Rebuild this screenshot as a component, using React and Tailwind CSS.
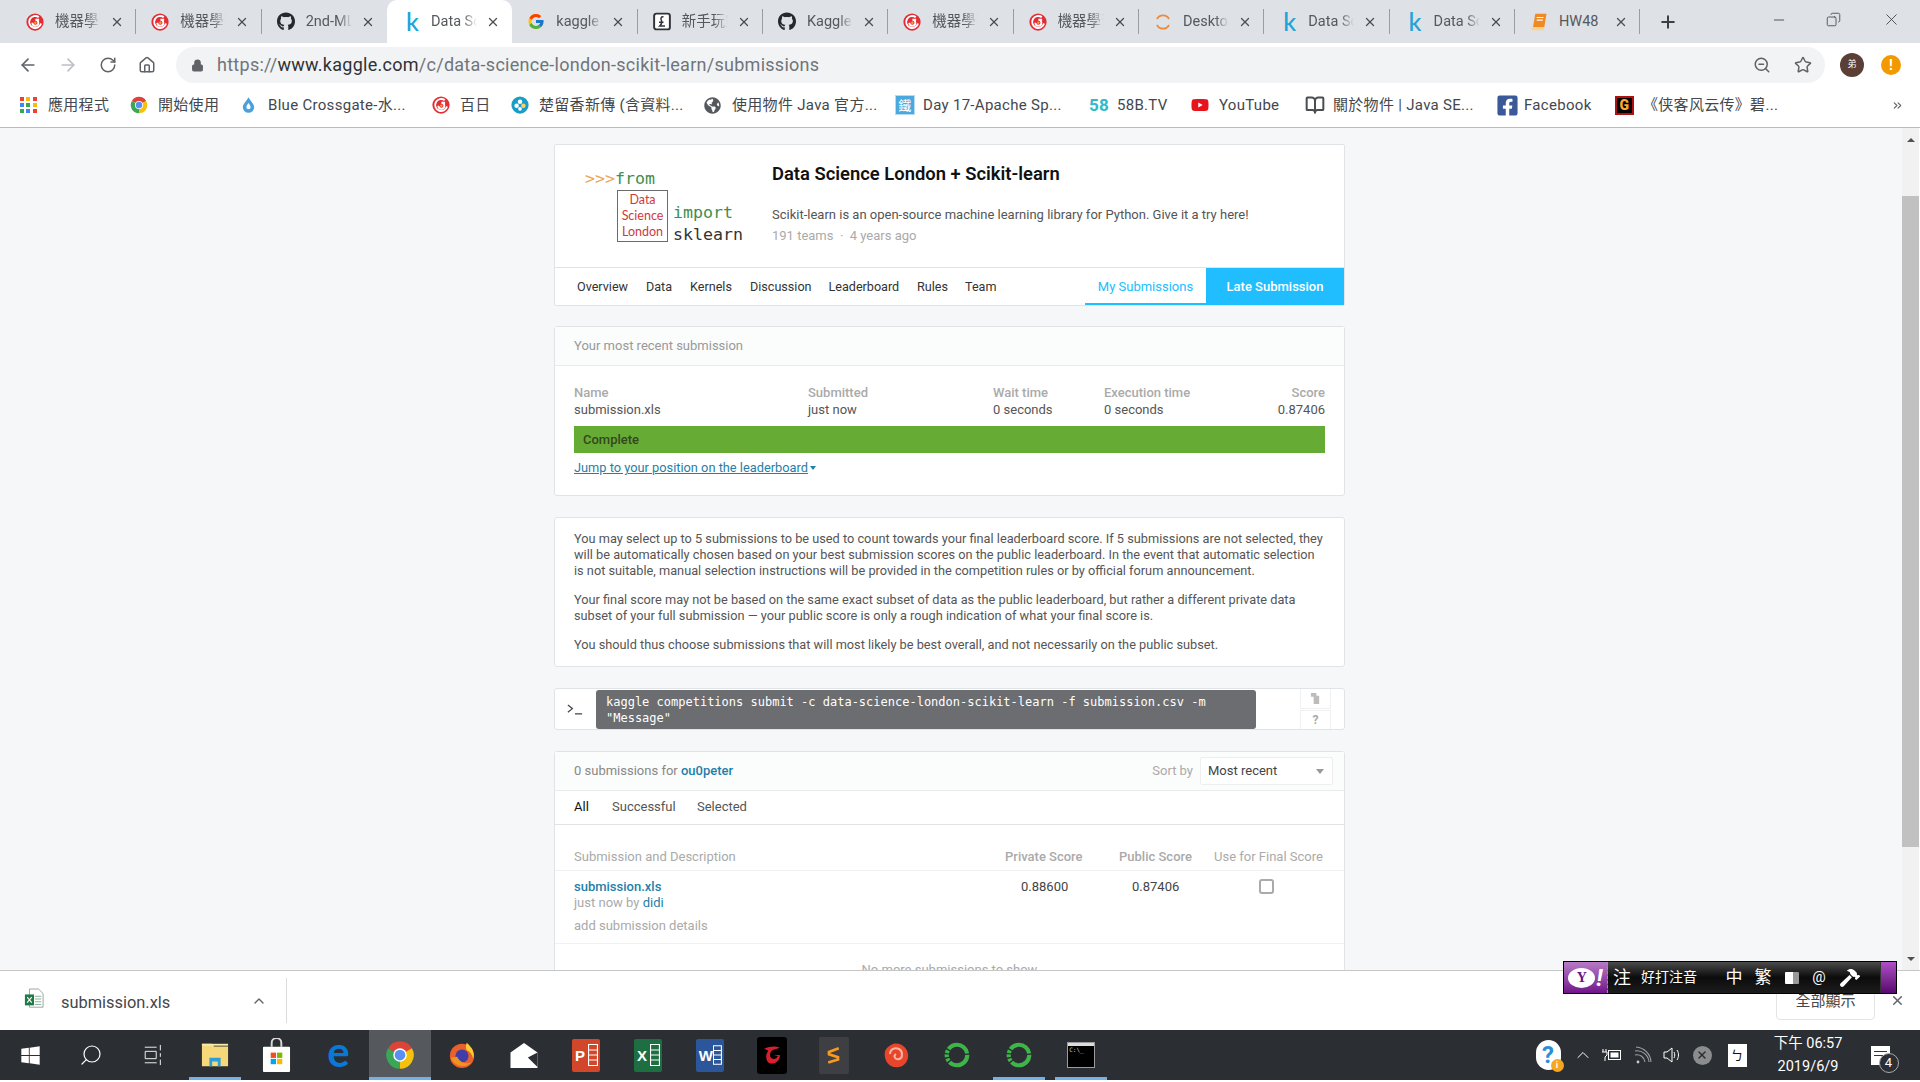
import { ArrowLeft, ArrowRight, RotateCw, Home, Lock, ZoomOut, Star, ChevronUp, X, Plus, Minus, Search, Copy, ChevronsRight, BookOpen } from "lucide-react";
import { FaGithub, FaFacebookSquare, FaYoutube, FaWindows, FaGlobeAmericas, FaHammer } from "react-icons/fa";
import { FcGoogle } from "react-icons/fc";

const SANS = "font-['Roboto','Noto_Sans_CJK_TC',sans-serif]";

function Swirl({ className = "w-[18px] h-[18px]" }) {
  return (
    <svg viewBox="0 0 24 24" className={className}>
      <circle cx="12" cy="12" r="11.5" fill="#e32d35" />
      <path d="M17 5.5A8 8 0 1 0 20 14" fill="none" stroke="#fff" strokeWidth="2.6" />
      <path d="M8.5 13a4 4 0 1 0 4-4h5" fill="none" stroke="#fff" strokeWidth="2.4" />
      <circle cx="12.5" cy="13" r="1.6" fill="#f6a623" />
    </svg>
  );
}

function KaggleK() {
  return <span className="ml-[4px] text-[25px] leading-none font-medium text-[#20a4d8] font-['Lato',sans-serif]">k</span>;
}

function ChromeLogo({ className = "w-[18px] h-[18px]" }) {
  return (
    <svg viewBox="0 0 24 24" className={className}>
      <path d="M12 12L2.47 6.5A11 11 0 0 1 21.53 6.5Z" fill="#db4437" />
      <path d="M12 12L21.53 6.5A11 11 0 0 1 12 23Z" fill="#f4c20d" />
      <path d="M12 12L12 23A11 11 0 0 1 2.47 6.5Z" fill="#3aa757" />
      <circle cx="12" cy="12" r="5.4" fill="#fff" />
      <circle cx="12" cy="12" r="4.3" fill="#5a8ff0" />
    </svg>
  );
}

function TabBook() {
  return (
    <svg viewBox="0 0 24 24" className="w-[20px] h-[20px]">
      <path d="M7 1h15l-3 18H4z" fill="#f08a24" />
      <path d="M4 19h15l-.5 4H4.5a2 2 0 0 1-.5-4z" fill="#fbd28f" />
      <path d="M9 6h9M9 9.5h8" stroke="#fff" strokeWidth="1.4" />
    </svg>
  );
}

function TabCoin() {
  return (
    <svg viewBox="0 0 24 24" className="w-[19px] h-[19px]">
      <rect x="1.5" y="1.5" width="21" height="21" rx="3" fill="#fff" stroke="#30343a" strokeWidth="2.6" />
      <path d="M14 6c-3-1-4 2-3 4s1 5-2 8h7M8 13h6" fill="none" stroke="#30343a" strokeWidth="2" />
    </svg>
  );
}

function TabDesktop() {
  return (
    <svg viewBox="0 0 24 24" className="w-[20px] h-[20px]">
      <path d="M4 8a9 9 0 0 1 16 0" fill="none" stroke="#ee8a3c" strokeWidth="2.4" />
      <path d="M4 16a9 9 0 0 0 16 0" fill="none" stroke="#ee8a3c" strokeWidth="2.4" />
    </svg>
  );
}

const TABS = [
  { icon: <Swirl />, title: "機器學習" },
  { icon: <Swirl />, title: "機器學習" },
  { icon: <FaGithub className="text-[19px] text-[#24292e]" />, title: "2nd-ML" },
  { icon: <KaggleK />, title: "Data Sci", active: true },
  { icon: <FcGoogle className="text-[19px]" />, title: "kaggle s" },
  { icon: <TabCoin />, title: "新手玩家" },
  { icon: <FaGithub className="text-[19px] text-[#24292e]" />, title: "Kaggle" },
  { icon: <Swirl />, title: "機器學習" },
  { icon: <Swirl />, title: "機器學習" },
  { icon: <TabDesktop />, title: "Desktop" },
  { icon: <KaggleK />, title: "Data Sci" },
  { icon: <KaggleK />, title: "Data Sci" },
  { icon: <TabBook />, title: "HW48", noFade: true },
];

function Tab({ tab, hideSep }) {
  return (
    <div className={`relative flex items-center w-[125.33px] h-full ${tab.active ? "bg-white rounded-t-[10px]" : ""}`}>
      <div className="w-[33px] pl-[15px] flex items-center justify-start shrink-0">{tab.icon}</div>
      <div
        className={`w-[46px] ml-[11px] overflow-hidden whitespace-nowrap text-[14.5px] text-[#55585d] ${tab.noFade ? "" : "[mask-image:linear-gradient(to_right,#000_70%,transparent)]"}`}
      >
        {tab.title}
      </div>
      <X className="w-[14px] h-[14px] ml-[9px] text-[#4a4d51] shrink-0" strokeWidth={2.2} />
      {!hideSep && <div className="absolute right-0 top-[9px] h-[25px] w-px bg-[#9a9da1]" />}
    </div>
  );
}

function TabStrip() {
  return (
    <div className="flex h-[43px] bg-[#dee1e6] shrink-0">
      <div className="w-[11px]" />
      {TABS.map((tab, i) => (
        <Tab key={i} tab={tab} hideSep={i === 2 || i === 3} />
      ))}
      <div className="w-[56px] flex items-center justify-center">
        <Plus className="w-[20px] h-[20px] text-[#3c4043]" strokeWidth={2.4} />
      </div>
      <div className="flex-1" />
      <div className="flex items-center pb-[4px] pr-[14px] text-[#3c4043]">
        <div className="w-[54px] flex justify-center"><Minus className="w-[16px] h-[16px]" strokeWidth={1.3} /></div>
        <div className="w-[54px] mr-[16px] flex justify-center"><Copy className="w-[15px] h-[17px] -scale-x-100" strokeWidth={1.3} /></div>
        <div className="w-[30px] flex justify-center"><X className="w-[19px] h-[19px]" strokeWidth={1.1} /></div>
      </div>
    </div>
  );
}

function Toolbar() {
  return (
    <div className="flex items-center h-[44px] bg-white shrink-0">
      <div className="w-[47px] flex justify-end pr-[9px]"><ArrowLeft className="w-[20px] h-[20px] text-[#5f6368]" strokeWidth={2} /></div>
      <div className="w-[42px] flex justify-center"><ArrowRight className="w-[20px] h-[20px] text-[#bcbfc3]" strokeWidth={2} /></div>
      <div className="w-[38px] flex justify-center"><RotateCw className="w-[18px] h-[18px] text-[#5f6368]" strokeWidth={2} /></div>
      <div className="w-[40px] flex justify-center"><Home className="w-[18px] h-[18px] text-[#5f6368]" strokeWidth={2} /></div>
      <div className="ml-[9px] w-[1649px] h-[36px] rounded-full bg-[#f1f3f4] flex items-center">
        <Lock className="ml-[15px] w-[13px] h-[13px] text-[#5f6368] fill-[#5f6368]" />
        <div className="ml-[13px] pb-[1px] text-[18px] text-[#70757a] whitespace-nowrap tracking-[0.27px]">
          https://<span className="text-[#303134]">www.kaggle.com</span>/c/data-science-london-scikit-learn/submissions
        </div>
        <div className="flex-1" />
        <ZoomOut className="w-[18px] h-[18px] text-[#5f6368]" strokeWidth={2} />
        <Star className="ml-[23px] mr-[13px] w-[18px] h-[18px] text-[#5f6368]" strokeWidth={2} />
      </div>
      <div className="ml-[15px] w-[24px] h-[24px] rounded-full bg-[#5b3f36] text-white text-[9px] flex items-center justify-center">弟</div>
      <div className="ml-[17px] w-[20px] h-[20px] rounded-full bg-[#f29900] text-white text-[14px] font-bold flex items-center justify-center">!</div>
    </div>
  );
}

function AppsIcon() {
  const colors = ["bg-[#ea4335]", "bg-[#fbbc05]", "bg-[#ea4335]", "bg-[#4285f4]", "bg-[#34a853]", "bg-[#fbbc05]", "bg-[#34a853]", "bg-[#4285f4]", "bg-[#ea4335]"];
  return (
    <div className="grid grid-cols-3 gap-[2px] w-[17px] h-[17px]">
      {colors.map((c, i) => (
        <div key={i} className={`w-[4px] h-[4px] ${c}`} />
      ))}
    </div>
  );
}

function DropIcon() {
  return (
    <svg viewBox="0 0 24 24" className="w-[17px] h-[20px]">
      <path d="M12 1C8 8 4 11 4 15a8 8 0 0 0 16 0c0-4-4-7-8-14z" fill="#4a9fdc" />
      <path d="M12 9c-2 3-3 4-3 6a3 3 0 0 0 6 0c0-2-1-3-3-6z" fill="#fff" />
    </svg>
  );
}

function FlowerIcon() {
  return (
    <svg viewBox="0 0 24 24" className="w-[18px] h-[18px]">
      <circle cx="12" cy="12" r="11.5" fill="#1b9cc4" />
      <circle cx="12" cy="7.5" r="3" fill="#fff" />
      <circle cx="7.5" cy="13" r="3" fill="#fff" />
      <circle cx="16.5" cy="13" r="3" fill="#f5d36a" />
      <circle cx="12" cy="17" r="2.5" fill="#fff" />
    </svg>
  );
}

function DayIcon() {
  return (
    <div className="w-[20px] h-[20px] bg-[#4aa8dc] border border-[#b5dcf2] flex items-center justify-center text-[13px] text-white leading-none">鐵</div>
  );
}

const BOOKMARKS = [
  { w: "w-[110px]", icon: <AppsIcon />, label: "應用程式" },
  { w: "w-[110px]", icon: <ChromeLogo />, label: "開始使用" },
  { w: "w-[192px]", icon: <DropIcon />, label: "Blue Crossgate-水..." },
  { w: "w-[79px]", icon: <Swirl />, label: "百日" },
  { w: "w-[193px]", icon: <FlowerIcon />, label: "楚留香新傳 (含資料..." },
  { w: "w-[191px]", icon: <FaGlobeAmericas className="text-[17px] text-[#55585d]" />, label: "使用物件 Java 官方..." },
  { w: "w-[194px]", icon: <DayIcon />, label: "Day 17-Apache Sp..." },
  { w: "w-[102px]", icon: <span className="text-[17px] font-bold text-[#2fb9c9] leading-none">58</span>, label: "58B.TV" },
  { w: "w-[114px]", icon: <FaYoutube className="text-[18px] text-[#e8141c]" />, label: "YouTube" },
  { w: "w-[191px]", icon: <BookOpen className="w-[20px] h-[20px] text-[#4a4d51]" strokeWidth={2.4} />, label: "關於物件 | Java SE..." },
  { w: "w-[119px]", icon: <FaFacebookSquare className="text-[23px] text-[#3b5998]" />, label: "Facebook" },
  { w: "w-[276px]", icon: <div className="w-[19px] h-[19px] bg-black text-[#f7a733] text-[14px] font-black flex items-center justify-center border-2 border-[#b01010]">G</div>, label: "《侠客风云传》碧..." },
];

function Bookmarks() {
  return (
    <div className="flex items-center h-[41px] pb-[4px] pl-[20px] bg-white border-b border-[#b9bbbe] shrink-0">
      {BOOKMARKS.map((b) => (
        <div key={b.label} className={`flex items-center ${b.w} whitespace-nowrap text-[15px] tracking-[0.3px] text-[#44474b]`}>
          <div className="w-[28px] shrink-0 flex items-center">{b.icon}</div>
          {b.label}
        </div>
      ))}
      <ChevronsRight className="w-[13px] h-[13px] text-[#5f6368]" />
    </div>
  );
}

function CompetitionLogo() {
  return (
    <div className="w-[217px] h-[122px] pt-[24px] pl-[30px] font-['DejaVu_Sans_Mono',monospace] text-[16.6px] leading-[20px]">
      <div className="whitespace-nowrap">
        <span className="text-[#eda758]">&gt;&gt;&gt;</span>
        <span className="text-[#3f8f4e]">from</span>
      </div>
      <div className="flex items-start ml-[32px] mt-[1px]">
        <div className="w-[51px] h-[52px] border border-[#6b6b6b] flex flex-col items-center justify-center font-['Lato',sans-serif] text-[12.5px] leading-[16px] text-[#cf3a3a]">
          <div>Data</div>
          <div>Science</div>
          <div>London</div>
        </div>
        <div className="ml-[5px] mt-[12px] leading-[22px]">
          <div className="text-[#3f8f4e]">import</div>
          <div className="text-[#333]">sklearn</div>
        </div>
      </div>
    </div>
  );
}

const NAV = [
  { label: "Overview", w: "w-[69px]" },
  { label: "Data", w: "w-[44px]" },
  { label: "Kernels", w: "w-[60px]" },
  { label: "Discussion", w: "w-[78.5px]" },
  { label: "Leaderboard", w: "w-[88.5px]" },
  { label: "Rules", w: "w-[48px]" },
  { label: "Team", w: "w-[40px]" },
];

function HeaderCard() {
  return (
    <div className="h-[162px] bg-white border border-[#e1e4e6] rounded-[2px] flex flex-col">
      <div className="flex h-[123px] border-b border-[#e1e4e6]">
        <CompetitionLogo />
        <div>
          <div className="mt-[17px] text-[18.4px] leading-[24px] font-semibold text-[#111]">Data Science London + Scikit-learn</div>
          <div className="mt-[21px] text-[13px] leading-[16px] text-[#555]">
            Scikit-learn is an open-source machine learning library for Python. Give it a try here!
          </div>
          <div className="mt-[5px] text-[13px] leading-[16px] text-[#aaa]">191 teams &nbsp;·&nbsp; 4 years ago</div>
        </div>
      </div>
      <div className="flex flex-1 items-stretch text-[12.6px] text-[#333]">
        <div className="w-[22px]" />
        {NAV.map((n) => (
          <div key={n.label} className={`${n.w} pt-[1px] flex items-center`}>{n.label}</div>
        ))}
        <div className="flex-1" />
        <div className="w-[121px] pt-[2px] flex items-center justify-center text-[13px] text-[#20beff] border-b-2 border-[#20beff]">My Submissions</div>
        <div className="w-[138px] flex items-center justify-center bg-[#20beff] text-[13px] text-white font-medium">Late Submission</div>
      </div>
    </div>
  );
}

function RecentCard() {
  return (
    <div className="mt-[20px] h-[170px] bg-white border border-[#e1e4e6] rounded-[3px] text-[13px]">
      <div className="h-[39px] bg-[#fbfcfc] border-b border-[#e9ebed] pl-[19px] flex items-center text-[#999]">Your most recent submission</div>
      <div className="px-[19px] pt-[19px]">
        <div className="flex leading-[16px]">
          <div className="w-[234px]"><div className="text-[#aaa] font-medium">Name</div><div className="text-[#555] mt-[1px]">submission.xls</div></div>
          <div className="w-[185px]"><div className="text-[#aaa] font-medium">Submitted</div><div className="text-[#555] mt-[1px]">just now</div></div>
          <div className="w-[111px]"><div className="text-[#aaa] font-medium">Wait time</div><div className="text-[#555] mt-[1px]">0 seconds</div></div>
          <div className="flex-1"><div className="text-[#aaa] font-medium">Execution time</div><div className="text-[#555] mt-[1px]">0 seconds</div></div>
          <div className="text-right"><div className="text-[#aaa] font-medium">Score</div><div className="text-[#555] mt-[1px]">0.87406</div></div>
        </div>
        <div className="mt-[8px] h-[27px] bg-[#66ab34] pl-[9px] flex items-center text-[#33471f] font-medium">Complete</div>
        <div className="mt-[5px] flex items-center text-[12.8px] text-[#1f7fa8]">
          <span className="underline">Jump to your position on the leaderboard</span>
          <span className="ml-[2px] w-0 h-0 border-x-[3.5px] border-x-transparent border-t-[4px] border-t-[#1f7fa8]" />
        </div>
      </div>
    </div>
  );
}

function InfoCard() {
  return (
    <div className="mt-[21px] h-[150px] bg-white border border-[#e1e4e6] rounded-[3px] px-[19px] pt-[13px] text-[12.75px] leading-[16px] text-[#555]">
      <p>
        You may select up to 5 submissions to be used to count towards your final leaderboard score. If 5 submissions are not selected, they will be automatically chosen based on your best submission scores on the public leaderboard. In the event that automatic selection is not suitable, manual selection instructions will be provided in the competition rules or by official forum announcement.
      </p>
      <p className="mt-[13px]">
        Your final score may not be based on the same exact subset of data as the public leaderboard, but rather a different private data subset of your full submission — your public score is only a rough indication of what your final score is.
      </p>
      <p className="mt-[13px]">
        You should thus choose submissions that will most likely be best overall, and not necessarily on the public subset.
      </p>
    </div>
  );
}

function CliCard() {
  return (
    <div className="mt-[21px] h-[42px] bg-white border border-[#e1e4e6] rounded-[3px] flex items-stretch">
      <div className="w-[41px] pl-[12px] flex items-center">
        <svg viewBox="0 0 18 12" className="w-[16px] h-[11px]">
          <path d="M1 1l5 4-5 4M9 11h8" fill="none" stroke="#444" strokeWidth="1.4" />
        </svg>
      </div>
      <div className="w-[660px] mt-[1px] h-[39px] rounded-[3px] bg-[#6b6d70] px-[10px] py-[4px] font-['DejaVu_Sans_Mono',monospace] text-[12px] leading-[16px] text-white whitespace-pre">
        {'kaggle competitions submit -c data-science-london-scikit-learn -f submission.csv -m\n"Message"'}
      </div>
      <div className="flex-1 flex justify-end pr-[13px]">
        <div className="w-[31px] flex flex-col text-[#aaa]">
          <div className="h-[20px] border-b border-x border-[#eef0f1] flex items-center justify-center">
            <svg viewBox="0 0 12 14" className="w-[11px] h-[13px]"><path d="M1 1h6l0 3h3v9H4V5H1z" fill="#bcbcbc" /></svg>
          </div>
          <div className="flex-1 mt-[1px] border border-b-0 border-[#eef0f1] flex items-center justify-center text-[12px] font-bold">?</div>
        </div>
      </div>
    </div>
  );
}

function SubmissionsCard() {
  return (
    <div className="mt-[21px] h-[260px] bg-white border border-[#e1e4e6] rounded-[3px] text-[13px]">
      <div className="h-[39px] bg-[#fbfcfc] border-b border-[#e9ebed] pl-[19px] pr-[11px] flex items-center">
        <span className="text-[#888]">0 submissions for <span className="text-[#1f7fa8] font-medium">ou0peter</span></span>
        <div className="flex-1" />
        <span className="text-[#aaa]">Sort by</span>
        <div className="ml-[7px] w-[133px] h-[28px] bg-white border border-[#eceeef] rounded-[2px] flex items-center justify-between pl-[7px] pr-[8px] text-[#444]">
          Most recent
          <span className="w-0 h-0 border-x-[4px] border-x-transparent border-t-[5px] border-t-[#999]" />
        </div>
      </div>
      <div className="h-[34px] pb-[1px] border-b border-[#e1e4e6] pl-[19px] flex items-center text-[#555]">
        <span className="w-[38px] text-[#111]">All</span>
        <span className="w-[85px]">Successful</span>
        <span>Selected</span>
      </div>
      <div className="h-[46px] pl-[19px] pb-[1px] border-b border-[#f0f1f2] flex items-end text-[#aaa]">
        <div className="w-[431px] pb-[3px]">Submission and Description</div>
        <div className="w-[114px] pb-[3px] font-medium">Private Score</div>
        <div className="w-[95px] pb-[3px] font-medium">Public Score</div>
        <div className="pb-[3px]">Use for Final Score</div>
      </div>
      <div className="h-[73px] pl-[19px] pt-[8px] border-b border-[#f0f1f2] flex">
        <div className="w-[431px] leading-[16px]">
          <div className="text-[#1f7fa8] font-medium">submission.xls</div>
          <div className="text-[#aaa]">just now by <span className="text-[#1f7fa8]">didi</span></div>
          <div className="mt-[7px] text-[#aaa]">add submission details</div>
        </div>
        <div className="w-[114px] pl-[16px] leading-[16px] text-[#444]">0.88600</div>
        <div className="w-[95px] pl-[13px] leading-[16px] text-[#444]">0.87406</div>
        <div className="pl-[45px]"><div className="w-[15px] h-[15px] border-2 border-[#aaa] rounded-[3px]" /></div>
      </div>
      <div className="pt-[18px] text-center leading-[16px] text-[#aaa]">No more submissions to show</div>
    </div>
  );
}

function Scrollbar() {
  return (
    <div className="w-[18px] bg-[#f1f1f1] border-r border-white flex flex-col items-center">
      <div className="h-[17px] mt-[3px] flex items-center"><span className="w-0 h-0 border-x-[4px] border-x-transparent border-b-[4px] border-b-[#505050]" /></div>
      <div className="mt-[48px] w-[17px] h-[651px] bg-[#c1c1c1]" />
      <div className="flex-1" />
      <div className="h-[17px] mb-[3px] flex items-center"><span className="w-0 h-0 border-x-[4px] border-x-transparent border-t-[4px] border-t-[#505050]" /></div>
    </div>
  );
}

function PageArea() {
  return (
    <div className="flex h-[842px] bg-[#f5f7f9] overflow-hidden shrink-0">
      <div className="flex-1 pl-[554px]">
        <div className="w-[791px] pt-[16px] h-full overflow-hidden">
          <HeaderCard />
          <RecentCard />
          <InfoCard />
          <CliCard />
          <SubmissionsCard />
        </div>
      </div>
      <Scrollbar />
    </div>
  );
}

function DownloadBar() {
  return (
    <div className="flex items-center h-[60px] bg-white border-t border-[#c4c6c8] shrink-0">
      <div className="w-[287px] h-[45px] border-r border-[#dcdcdc] flex items-center">
        <svg viewBox="0 0 22 24" className="ml-[24px] w-[20px] h-[22px] mb-[3px]">
          <path d="M6 1h10l5 5v15H6z" fill="#fff" stroke="#9a9a9a" />
          <path d="M12 9h7M12 12h7M12 15h7M12 18h7" stroke="#7cb08f" />
          <rect x="1" y="7" width="10" height="12" fill="#1f7a45" />
          <path d="M3.5 10l5 6M8.5 10l-5 6" stroke="#fff" strokeWidth="1.2" />
        </svg>
        <span className="ml-[17px] w-[190px] pt-[6px] text-[16.4px] text-[#44474b]">submission.xls</span>
        <ChevronUp className="w-[16px] h-[16px] text-[#5f6368]" />
      </div>
      <div className="flex-1" />
      <div className="w-[99px] h-[38px] mt-[1px] border border-[#e3e4e6] rounded-[4px] flex items-center justify-center text-[15px] text-[#44474b]">全部顯示</div>
      <X className="ml-[15px] mr-[15px] w-[15px] h-[15px] text-[#5f6368]" strokeWidth={2.4} />
    </div>
  );
}

function Explorer() {
  return (
    <svg viewBox="0 0 30 30" className="w-[28px] h-[30px]">
      <path d="M1 3h11l2 3h15v21H1z" fill="#f6d77a" />
      <rect x="1" y="3" width="28" height="2" fill="#fbeaa9" />
      <path d="M9 27V18h12v9h-3v-5h-6v5z" fill="#2f9ed8" />
    </svg>
  );
}

function Store() {
  return (
    <svg viewBox="0 0 30 36" className="w-[29px] h-[35px]">
      <path d="M10 9V5a5 5 0 0 1 10 0v4" fill="none" stroke="#d9d9d9" strokeWidth="2" />
      <rect x="1" y="9" width="28" height="26" rx="1" fill="#fff" />
      <rect x="9" y="15" width="5.5" height="5.5" fill="#f25022" />
      <rect x="15.5" y="15" width="5.5" height="5.5" fill="#7fba00" />
      <rect x="9" y="21.5" width="5.5" height="5.5" fill="#00a4ef" />
      <rect x="15.5" y="21.5" width="5.5" height="5.5" fill="#ffb900" />
    </svg>
  );
}

function Firefox() {
  return (
    <svg viewBox="0 0 30 30" className="w-[28px] h-[30px]">
      <circle cx="15" cy="16" r="13" fill="#e8612c" />
      <path d="M20 2c6 5 9 11 7 17-1-5-4-8-7-9-1-3-1-5 0-8z" fill="#ffcb2d" />
      <circle cx="15" cy="16" r="7" fill="#3f3ea8" />
      <path d="M3 18c3 9 15 12 22 5-6 2-13 0-15-6z" fill="#f2921f" />
    </svg>
  );
}

function Mail() {
  return (
    <svg viewBox="0 0 30 28" className="w-[30px] h-[27px]">
      <path d="M1 11L15 1l14 10v16H1z" fill="#fff" />
      <path d="M1 9.5l18 6.5 10 10v-15l-10 5z" fill="#2b2e33" />
    </svg>
  );
}

function OfficeTile({ letter, base }) {
  return (
    <div className={`flex items-center justify-between w-[28px] h-[33px] pl-[3px] pr-[2px] ${base} rounded-[2px]`}>
      <span className="text-[15px] font-bold leading-none text-white font-['Liberation_Sans',sans-serif]">{letter}</span>
      <svg viewBox="0 0 10 22" className="w-[10px] h-[22px]">
        <path d="M.5.5h9v21h-9zM0 6h10M0 11h10M0 16h10" fill="none" stroke="#fff" strokeWidth="1.2" />
      </svg>
    </div>
  );
}

function Garena() {
  return (
    <div className="w-[30px] h-[37px] rounded-[3px] bg-black flex items-center justify-center">
      <svg viewBox="0 0 20 22" className="w-[21px] h-[24px]"><path d="M3 5c5-2 10-3 15-1l-6 2c-3 1-4 4-3 7 2 3 6 2 7-1l-4-1h6c0 6-5 9-9 8C4 18 4 10 7 7z" fill="#d91f2b" /></svg>
    </div>
  );
}

function Sublime() {
  return (
    <div className="w-[30px] h-[37px] rounded-[2px] bg-[#3d3f42] flex items-center justify-center">
      <svg viewBox="0 0 20 24" className="w-[15px] h-[24px]"><path d="M17 3L4 8v3l12 4v3L3 22" fill="none" stroke="#f89a1d" strokeWidth="3.6" /></svg>
    </div>
  );
}

function Snail() {
  return (
    <svg viewBox="0 0 30 32" className="w-[30px] h-[32px]">
      <path d="M4 12c-2 10 5 18 14 16 6-1 10-7 9-13C26 8 19 3 12 5 9 6 6 8 4 12z" fill="#e8452c" />
      <path d="M9 15c0-5 5-7 9-5s4 9 0 10-6-3-3-5" fill="none" stroke="#f9b7a0" strokeWidth="2" />
    </svg>
  );
}

function GreenRing() {
  return (
    <svg viewBox="0 0 30 30" className="w-[28px] h-[30px]">
      <circle cx="15" cy="15" r="11" fill="none" stroke="#3fb449" strokeWidth="4.5" strokeDasharray="26 1.5 3 1.5 3 1.5 3 1.5" />
    </svg>
  );
}

function Terminal() {
  return (
    <div className="w-[28px] h-[26px] bg-black border border-[#9b9b9b] flex flex-col">
      <div className="h-[3px] bg-[#dcdcdc]" />
      <span className="text-[6px] leading-[8px] pl-[1px] text-[#ccc] font-['DejaVu_Sans_Mono',monospace]">C:\_</span>
    </div>
  );
}

const TASKBAR = [
  { w: "w-[60px]", icon: <FaWindows className="text-[21px] text-white" /> },
  { w: "w-[61.9px]", icon: <Search className="w-[24px] h-[24px] text-white -scale-x-100" strokeWidth={1.2} /> },
  { w: "w-[61.9px]", icon: <svg viewBox="0 0 20 24" className="w-[20px] h-[22px]"><path d="M1 3.5h13M1 20.5h13M1.5 8h12v8h-12zM18 1v6M18 10v4M18 17v6" fill="none" stroke="#fff" /></svg> },
  { w: "w-[61.9px]", icon: <Explorer />, bar: true },
  { w: "w-[61.9px]", icon: <Store /> },
  { w: "w-[61.9px]", icon: <span className="text-[42px] leading-none font-bold text-[#0a78d7] font-['Lato',sans-serif] -mt-[8px]">e</span> },
  { w: "w-[61.9px]", icon: <ChromeLogo className="w-[30px] h-[30px]" />, active: true },
  { w: "w-[61.9px]", icon: <Firefox /> },
  { w: "w-[61.9px]", icon: <Mail /> },
  { w: "w-[61.9px]", icon: <OfficeTile letter="P" base="bg-[#d2472a]" /> },
  { w: "w-[61.9px]", icon: <OfficeTile letter="X" base="bg-[#1d6f42]" /> },
  { w: "w-[61.9px]", icon: <OfficeTile letter="W" base="bg-[#2b579a]" /> },
  { w: "w-[61.9px]", icon: <Garena /> },
  { w: "w-[61.9px]", icon: <Sublime /> },
  { w: "w-[61.9px]", icon: <Snail /> },
  { w: "w-[61.9px]", icon: <GreenRing /> },
  { w: "w-[61.9px]", icon: <GreenRing />, bar: true },
  { w: "w-[61.9px]", icon: <Terminal />, bar: true },
];

function Taskbar() {
  return (
    <div className="flex items-stretch h-[50px] bg-[#2b2e33] shrink-0">
      {TASKBAR.map((t, i) => (
        <div key={i} className={`relative ${t.w} flex items-center justify-center ${t.active ? "bg-[#55585c]" : ""}`}>
          {t.icon}
          {t.bar && <div className="absolute bottom-0 left-[5px] right-[5px] h-[3px] bg-[#76b1e3]" />}
          {t.active && <div className="absolute bottom-0 left-0 right-0 h-[3px] bg-[#76b1e3]" />}
        </div>
      ))}
      <div className="flex-1" />
      <div className="w-[36px] flex items-center justify-center">
        <div className="relative w-[25px] h-[30px] rounded-full bg-white flex items-center justify-center text-[24px] font-bold leading-none text-[#2a8dd8]">
          ?
          <span className="absolute -right-[3px] -bottom-[2px] w-[13px] h-[13px] rounded-full bg-[#f5a623] text-[9px] text-white flex items-center justify-center">i</span>
        </div>
      </div>
      <div className="w-[34px] flex items-center justify-center"><ChevronUp className="w-[20px] h-[20px] text-white" strokeWidth={1.2} /></div>
      <div className="w-[24px] flex items-center justify-center">
        <svg viewBox="0 0 20 14" className="w-[20px] h-[14px]">
          <path d="M1 1v3M4 1v3M0 4h5v3l-2 2v4" fill="none" stroke="#fff" />
          <rect x="6.5" y="2.5" width="12" height="9" fill="none" stroke="#fff" />
          <rect x="8.5" y="4.5" width="8" height="5" fill="#fff" />
        </svg>
      </div>
      <div className="w-[38px] flex items-center justify-center">
        <svg viewBox="0 0 20 20" className="w-[20px] h-[20px]">
          <circle cx="5" cy="17" r="1.4" fill="#ccc" />
          <path d="M2 10a8 8 0 0 1 10 7M2 6a12 12 0 0 1 14 11M3 2a16 16 0 0 1 15 15" fill="none" stroke="#9fa1a3" strokeWidth="1.1" />
        </svg>
      </div>
      <div className="w-[20px] flex items-center justify-center">
        <svg viewBox="0 0 20 20" className="w-[20px] h-[20px]">
          <path d="M2 7h3l5-4v14l-5-4H2z" fill="none" stroke="#fff" />
          <path d="M12 7c1 2 1 4 0 6M15 5c2 3 2 7 0 10" fill="none" stroke="#fff" />
        </svg>
      </div>
      <div className="w-[40px] flex items-center justify-center">
        <div className="w-[19px] h-[19px] rounded-full bg-[#8a8c8e] flex items-center justify-center"><X className="w-[12px] h-[12px] text-[#2b2e33]" strokeWidth={3} /></div>
      </div>
      <div className="w-[30px] flex items-center justify-center">
        <div className="w-[19px] h-[23px] bg-white text-[#111] text-[13px] leading-none flex items-center justify-center">ㄅ</div>
      </div>
      <div className="w-[112px] flex flex-col items-center justify-center text-[14.5px] leading-[23px] text-white">
        <div>下午 06:57</div>
        <div>2019/6/9</div>
      </div>
      <div className="w-[32px] flex items-center justify-center">
        <div className="relative w-[19px] h-[19px] bg-white">
          <span className="absolute left-[3px] right-[3px] top-[5px] h-px bg-[#333]" />
          <span className="absolute left-[3px] right-[3px] top-[9px] h-px bg-[#333]" />
          <span className="absolute -right-[9px] top-[7px] w-[20px] h-[20px] rounded-full bg-[#2b2e33] border border-[#aaa] text-[13px] text-white flex items-center justify-center">4</span>
        </div>
      </div>
      <div className="w-[24px]" />
    </div>
  );
}

function ImeBar() {
  return (
    <div className="absolute left-[1563px] top-[961px] w-[334px] h-[33px] border border-black flex items-stretch bg-gradient-to-b from-[#4c4c4c] via-[#0c0c0c] to-[#1c1c1c] text-white">
      <div className="w-[44px] bg-gradient-to-b from-[#b77ac4] to-[#72108c] flex items-center justify-center gap-[1px] border-r border-dashed border-[#999]">
        <span className="w-[27px] h-[20px] rounded-[50%] bg-white text-[#6e0f87] text-[14px] font-bold flex items-center justify-center font-['Liberation_Serif',serif]">Y</span>
        <span className="text-[24px] font-bold italic leading-none">!</span>
      </div>
      <div className="w-[22px] ml-[3px] text-[18px] flex items-center justify-center">注</div>
      <div className="ml-[8px] w-[60px] text-[14px] flex items-center whitespace-nowrap">好打注音</div>
      <div className="ml-[23px] w-[20px] text-[17px] flex items-center justify-center">中</div>
      <div className="ml-[9px] w-[20px] text-[17px] flex items-center justify-center">繁</div>
      <div className="ml-[12px] flex items-center"><div className="w-[14px] h-[12px] bg-white border-r-[6px] border-r-[#999] rounded-[1px]" /></div>
      <div className="ml-[12px] w-[16px] text-[15px] flex items-center justify-center">@</div>
      <div className="ml-[13px] flex items-center"><FaHammer className="text-[20px] text-white" /></div>
      <div className="flex-1" />
      <div className="w-[16px] bg-gradient-to-b from-[#b04fc7] to-[#57066d] border-l border-[#333]" />
    </div>
  );
}

export default function App() {
  return (
    <div className={`relative w-[1920px] h-[1082px] overflow-hidden bg-white flex flex-col ${SANS}`}>
      <TabStrip />
      <Toolbar />
      <Bookmarks />
      <PageArea />
      <DownloadBar />
      <Taskbar />
      <ImeBar />
    </div>
  );
}
